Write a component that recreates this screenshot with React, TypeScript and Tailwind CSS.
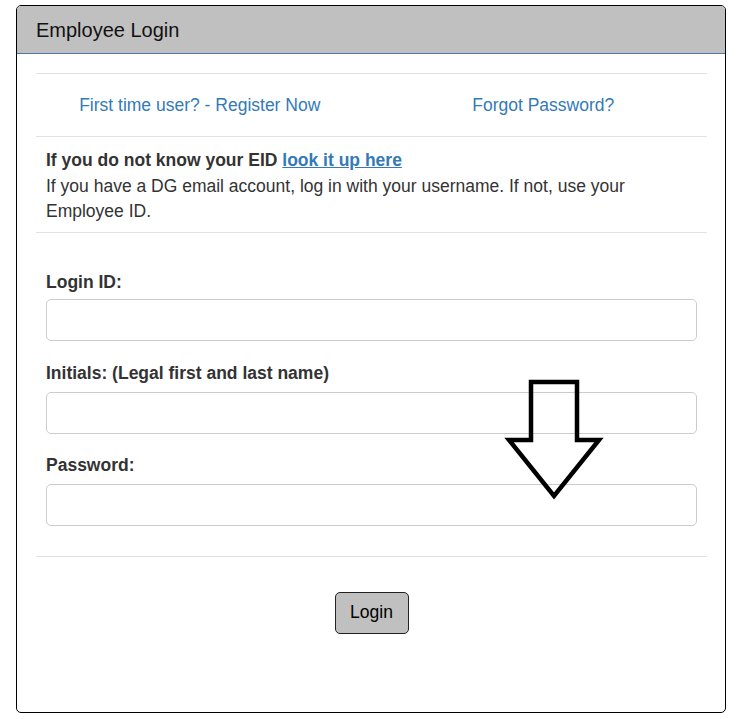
export default function App() {
  return (
    <div
      className="relative min-h-[719px] bg-white pl-[16px] pt-[5px] text-[17.5px] text-[#333]"
      style={{ fontFamily: '"Liberation Sans", Arial, sans-serif' }}
    >
      <div className="flex h-[708px] w-[710px] flex-col rounded-[5px] border border-black">
        {/* Heading */}
        <div className="flex h-[48px] items-center rounded-t-[4px] border-b border-[#4a79a8] bg-[#c0c0c0] pl-[19px] text-[20px] text-[#111]">
          Employee Login
        </div>

        <div className="pl-[19px] pr-[18px] pt-[19px]">
          <hr className="border-t border-[#e2e2e2]" />

          <div className="-mx-[8px] grid h-[62px] grid-cols-2 items-center text-center text-[#337ab7]">
            <a href="#">First time user? - Register Now</a>
            <a href="#">Forgot Password?</a>
          </div>

          <hr className="border-t border-[#e2e2e2]" />

          <div className="px-[10px] pb-[7px] pt-[11px] leading-[25.5px]">
            <div className="font-bold">
              If you do not know your EID{" "}
              <a href="#" className="text-[#337ab7] underline">
                look it up here
              </a>
            </div>
            <div>
              If you have a DG email account, log in with your username. If not, use your Employee ID.
            </div>
          </div>

          <hr className="border-t border-[#e2e2e2]" />

          <form className="flex flex-col px-[10px] pt-[37px] leading-[25px]" onSubmit={(e) => e.preventDefault()}>
            <label className="mb-[4px] font-bold">Login ID:</label>
            <input type="text" className="mb-[20px] h-[42px] w-full rounded-[5px] border border-[#ccc] px-3" />

            <label className="mb-[6px] font-bold">Initials: (Legal first and last name)</label>
            <input type="text" className="mb-[19px] h-[42px] w-full rounded-[5px] border border-[#ccc] px-3" />

            <label className="mb-[6px] font-bold">Password:</label>
            <input type="password" className="h-[42px] w-full rounded-[5px] border border-[#ccc] px-3" />
          </form>

          <hr className="mt-[30px] border-t border-[#e2e2e2]" />

          <div className="flex justify-center pt-[35px]">
            <button
              type="button"
              className="h-[42px] w-[74px] rounded-[5px] border border-[#222] bg-[#c0c0c0] text-[17.5px] text-black"
            >
              Login
            </button>
          </div>
        </div>
      </div>

      {/* hand-drawn arrow overlay */}
      <svg className="pointer-events-none absolute left-0 top-0" width="742" height="719" viewBox="0 0 742 719">
        <path
          d="M531 382 H577 V440 H599 L554 496 L509 440 H531 Z"
          fill="none"
          stroke="#000"
          strokeWidth="4.5"
          strokeLinejoin="miter"
        />
      </svg>
    </div>
  )
}
